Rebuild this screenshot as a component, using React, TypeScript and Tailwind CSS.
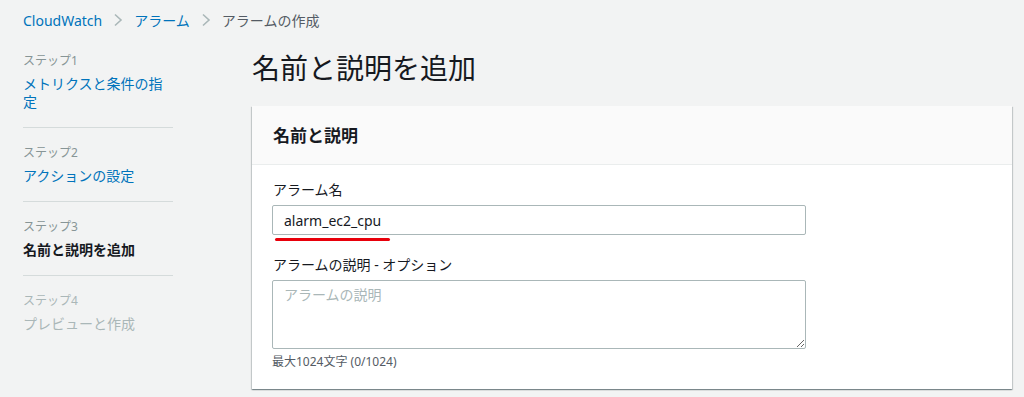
import React from "react";

const font = { fontFamily: '"Noto Sans", "Noto Sans CJK JP", sans-serif' };

function Chevron() {
  return (
    <svg width="10" height="14" viewBox="0 0 10 14" className="mx-[11px]">
      <path d="M2 1.5 L8 7 L2 12.5" fill="none" stroke="#aab7b8" strokeWidth="1.6" />
    </svg>
  );
}

type Step = { label: string; title: string; state: "link" | "current" | "disabled" };

const steps: Step[] = [
  { label: "ステップ1", title: "メトリクスと条件の指定", state: "link" },
  { label: "ステップ2", title: "アクションの設定", state: "link" },
  { label: "ステップ3", title: "名前と説明を追加", state: "current" },
  { label: "ステップ4", title: "プレビューと作成", state: "disabled" },
];

export default function App() {
  return (
    <div className="min-h-[397px] w-[1024px] bg-[#f2f3f3] text-[#16191f]" style={font}>
      {/* Breadcrumb */}
      <div className="h-[40px] flex items-center pl-[23px] text-[14px]">
        <span className="text-[#0073bb]">CloudWatch</span>
        <Chevron />
        <span className="text-[#0073bb]">アラーム</span>
        <Chevron />
        <span className="text-[#545b64]">アラームの作成</span>
      </div>

      <div className="flex">
        {/* Steps nav */}
        <nav className="ml-[23px] w-[150px] pt-[13px] shrink-0">
          {steps.map((s, i) => (
            <div
              key={s.label}
              className={
                (i === 0 ? "pt-0 " : "pt-[17px] ") +
                (i < steps.length - 1 ? "pb-[16px] border-b border-[#d5dbdb]" : "")
              }
            >
              <div
                className={
                  "text-[12px] leading-[16px] " +
                  (s.state === "disabled" ? "text-[#aab7b8]" : "text-[#879596]")
                }
              >
                {s.label}
              </div>
              <div
                className={
                  "mt-[6px] text-[14px] leading-[18px] " +
                  (s.state === "link"
                    ? "text-[#0073bb]"
                    : s.state === "current"
                    ? "font-bold text-[#16191f]"
                    : "text-[#aab7b8]")
                }
              >
                {s.title}
              </div>
            </div>
          ))}
        </nav>

        {/* Main content */}
        <main className="ml-[79px] w-[760px]">
          <h1 className="mt-[11px] text-[28px] leading-[34px] font-normal text-[#16191f]">
            名前と説明を追加
          </h1>

          <section className="mt-[21px] bg-white shadow-[0_1px_1px_0_rgba(0,28,36,0.3),1px_1px_1px_0_rgba(0,28,36,0.15),-1px_1px_1px_0_rgba(0,28,36,0.15)]">
            <div className="h-[59px] flex items-center px-[21px] pt-[2px] bg-[#fafafa] border-b border-[#eaeded]">
              <h2 className="text-[17px] font-bold leading-[22px]">名前と説明</h2>
            </div>

            <div className="px-[20px] pt-[15px] pb-[19px]">
              <label className="block pl-[1px] text-[14px] leading-[20px] text-[#16191f]">アラーム名</label>
              <div className="relative mt-[5px]">
                <input
                  defaultValue="alarm_ec2_cpu"
                  className="block w-[534px] h-[30px] px-[11px] text-[14px] text-[#16191f] bg-white border border-[#aab7b8] rounded-[2px] outline-none"
                  style={font}
                />
                <div className="absolute left-[3px] top-[33px] w-[115px] h-[3px] rounded-full bg-[#e8000b]" />
              </div>

              <label className="block mt-[20px] pl-[1px] text-[14px] leading-[20px] text-[#16191f]">
                アラームの説明 - オプション
              </label>
              <textarea
                placeholder="アラームの説明"
                className="block mt-[5px] w-[534px] h-[69px] px-[11px] py-[4px] text-[14px] leading-[20px] bg-white border border-[#aab7b8] rounded-[2px] outline-none placeholder:text-[#aab7b8]"
                style={font}
              />
              <div className="mt-[5px] text-[12px] leading-[16px] text-[#545b64]">最大1024文字 (0/1024)</div>
            </div>
          </section>
        </main>
      </div>
    </div>
  );
}
